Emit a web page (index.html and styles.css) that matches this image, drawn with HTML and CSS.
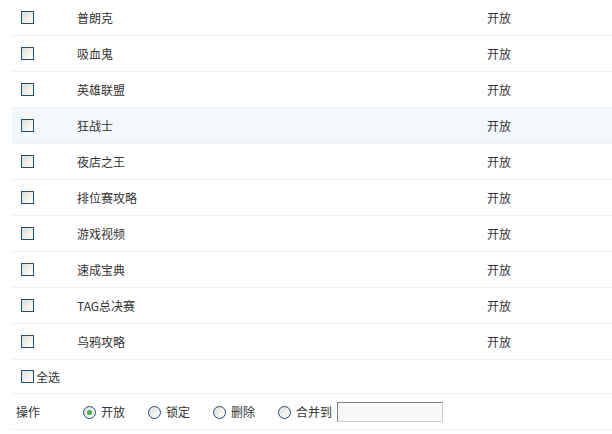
FILE: index.html
```html
<!DOCTYPE html>
<html lang="zh-CN">

<head>
  <meta charset="UTF-8">
  <title>版块管理</title>
  <link rel="stylesheet" href="styles.css">
</head>

<body>
  <table class="list">
    <tr><td class="c-chk"><input type="checkbox" class="chk"></td><td class="c-name">普朗克</td><td class="c-state">开放</td></tr>
    <tr><td class="c-chk"><input type="checkbox" class="chk"></td><td class="c-name">吸血鬼</td><td class="c-state">开放</td></tr>
    <tr><td class="c-chk"><input type="checkbox" class="chk"></td><td class="c-name">英雄联盟</td><td class="c-state">开放</td></tr>
    <tr class="hover"><td class="c-chk"><input type="checkbox" class="chk"></td><td class="c-name">狂战士</td><td class="c-state">开放</td></tr>
    <tr><td class="c-chk"><input type="checkbox" class="chk"></td><td class="c-name">夜店之王</td><td class="c-state">开放</td></tr>
    <tr><td class="c-chk"><input type="checkbox" class="chk"></td><td class="c-name">排位赛攻略</td><td class="c-state">开放</td></tr>
    <tr><td class="c-chk"><input type="checkbox" class="chk"></td><td class="c-name">游戏视频</td><td class="c-state">开放</td></tr>
    <tr><td class="c-chk"><input type="checkbox" class="chk"></td><td class="c-name">速成宝典</td><td class="c-state">开放</td></tr>
    <tr><td class="c-chk"><input type="checkbox" class="chk"></td><td class="c-name">TAG总决赛</td><td class="c-state">开放</td></tr>
    <tr><td class="c-chk"><input type="checkbox" class="chk"></td><td class="c-name">乌鸦攻略</td><td class="c-state">开放</td></tr>
  </table>

  <div class="all">
    <label><input type="checkbox" class="chk">全选</label>
  </div>

  <div class="ops">
    <span class="ops-title">操作</span>
    <label class="opt"><input type="radio" name="op" class="rad" checked>开放</label>
    <label class="opt"><input type="radio" name="op" class="rad">锁定</label>
    <label class="opt"><input type="radio" name="op" class="rad">删除</label>
    <label class="opt last"><input type="radio" name="op" class="rad">合并到</label>
    <input type="text" class="merge">
  </div>
</body>

</html>
```

FILE: styles.css
```css
body {
  margin: 0;
  padding: 0;
  background: #fff;
  color: #333;
  font-family: "Noto Sans CJK SC", "Liberation Sans", sans-serif;
  font-size: 12px;
}

.list {
  margin-left: 12px;
  width: 600px;
  border-collapse: collapse;
}

.list td {
  height: 35px;
  padding: 0;
  border-bottom: 1px solid #f1f1f1;
  vertical-align: middle;
}

.list .hover td {
  background-color: #f2f8fc;
}

.c-chk {
  width: 56px;
  padding-left: 9px !important;
}

.c-name {
  width: 410px;
}

.chk {
  -webkit-appearance: none;
  appearance: none;
  display: block;
  width: 13px;
  height: 13px;
  margin: 0;
  border: 1px solid #1c5180;
  background: linear-gradient(135deg, #dcdcd7, #f3f3f0 60%, #fff);
  box-sizing: border-box;
}

.all {
  margin-left: 12px;
  width: 600px;
  height: 33px;
  border-bottom: 1px solid #f1f1f1;
  display: flex;
  align-items: center;
  padding-left: 9px;
  box-sizing: content-box;
}

.all label {
  display: flex;
  align-items: center;
  gap: 2px;
}

.ops {
  margin-left: 12px;
  width: 600px;
  height: 36px;
  border-bottom: 1px solid #f1f1f1;
  display: flex;
  align-items: center;
  padding-left: 4px;
  box-sizing: border-box;
}

.ops-title {
  width: 67px;
}

.opt {
  display: flex;
  align-items: center;
  gap: 5px;
  margin-right: 23px;
}

.opt.last {
  margin-right: 5px;
}

.rad {
  -webkit-appearance: none;
  appearance: none;
  width: 13px;
  height: 13px;
  margin: 2px 0 0;
  border: 1px solid #1c5180;
  border-radius: 50%;
  background: linear-gradient(135deg, #dcdcd7, #f3f3f0 60%, #fff);
  box-sizing: border-box;
  position: relative;
}

.rad:checked::after {
  content: "";
  position: absolute;
  left: 3px;
  top: 3px;
  width: 5px;
  height: 5px;
  border-radius: 50%;
  background: #3fb244;
}

.merge {
  width: 106px;
  height: 20px;
  margin: 0;
  padding: 0 3px;
  border: 1px solid #7f7f7f;
  border-right-color: #ccc;
  border-bottom-color: #ccc;
  background: #f8f8f8;
  box-sizing: border-box;
}
```
